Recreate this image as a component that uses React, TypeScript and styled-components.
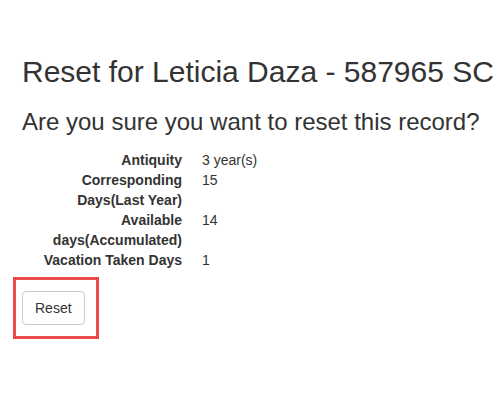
import React from "react";
import styled, { createGlobalStyle } from "styled-components";

const GlobalStyle = createGlobalStyle`
  html, body {
    margin: 0;
    padding: 0;
    background: #ffffff;
  }
  body {
    font-family: "Liberation Sans", Arial, Helvetica, sans-serif;
    font-size: 14px;
    line-height: 20px;
    color: #333333;
  }
`;

const Page = styled.div`
  padding: 55px 0 0 22px;
`;

const Title = styled.h2`
  margin: 0 0 20px 0;
  font-size: 30px;
  font-weight: 400;
  line-height: 33px;
  color: #333333;
  white-space: nowrap;
`;

const Subtitle = styled.h3`
  margin: 0 0 15px 0;
  font-size: 24px;
  font-weight: 400;
  line-height: 27px;
  color: #333333;
  white-space: nowrap;
`;

const DetailList = styled.dl`
  display: grid;
  grid-template-columns: 160px 1fr;
  column-gap: 20px;
  margin: 0 0 7px 0;
`;

const Term = styled.dt`
  font-weight: 700;
  text-align: right;
  font-size: 14px;
  line-height: 20px;
`;

const Value = styled.dd`
  margin: 0;
  font-size: 14px;
  line-height: 20px;
`;

const Highlight = styled.div`
  display: inline-flex;
  margin-left: -9px;
  padding: 11px 11px 11px 6px;
  border: 3px solid #e84b4b;
`;

const Button = styled.button`
  font-family: "Liberation Sans", Arial, Helvetica, sans-serif;
  font-size: 14px;
  line-height: 20px;
  padding: 6px 12px;
  color: #333333;
  background: #ffffff;
  border: 1px solid #cccccc;
  border-radius: 4px;
  cursor: pointer;
`;

const rows: [string, string][] = [
  ["Antiquity", "3 year(s)"],
  ["Corresponding Days(Last Year)", "15"],
  ["Available days(Accumulated)", "14"],
  ["Vacation Taken Days", "1"],
];

export default function App() {
  return (
    <>
      <GlobalStyle />
      <Page>
        <Title>Reset for Leticia Daza - 587965 SC</Title>
        <Subtitle>Are you sure you want to reset this record?</Subtitle>
        <DetailList>
          {rows.map(([k, v]) => (
            <React.Fragment key={k}>
              <Term>{k}</Term>
              <Value>{v}</Value>
            </React.Fragment>
          ))}
        </DetailList>
        <Highlight>
          <Button type="button">Reset</Button>
        </Highlight>
      </Page>
    </>
  );
}
